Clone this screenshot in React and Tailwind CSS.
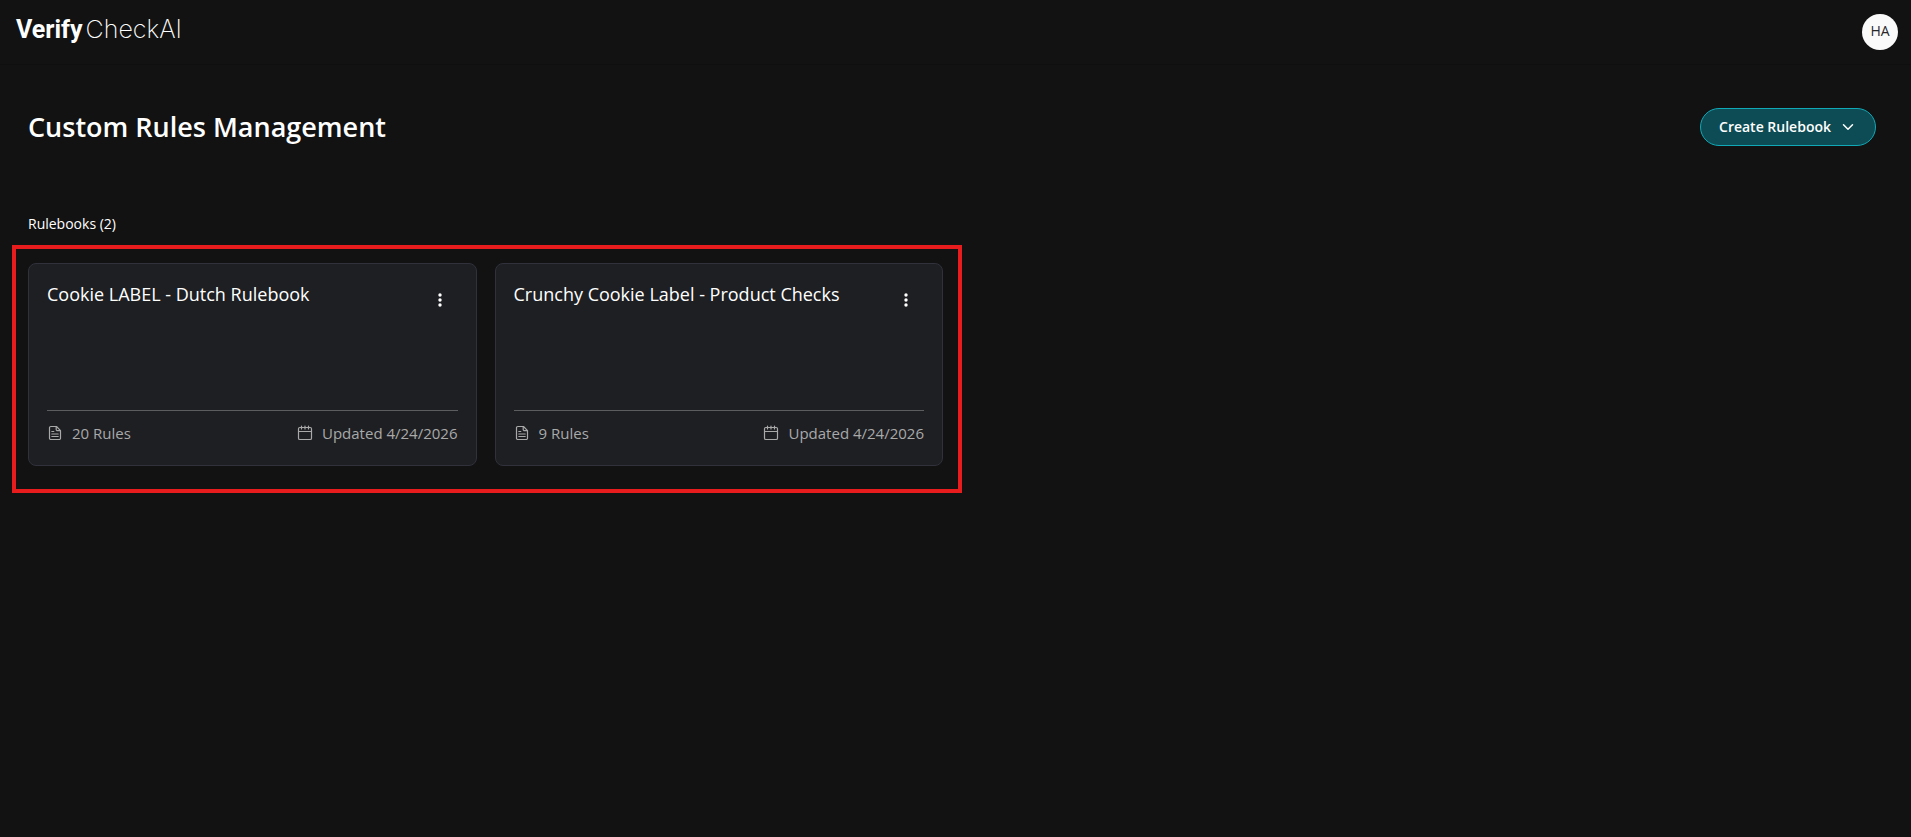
import React from 'react';
import { ChevronDown } from 'lucide-react';

const rulebooks = [
  { id: 1, name: 'Cookie LABEL - Dutch Rulebook', rules: 20, updated: '4/24/2026' },
  { id: 2, name: 'Crunchy Cookie Label - Product Checks', rules: 9, updated: '4/24/2026' },
];

const DotsIcon = () => (
  <svg viewBox="0 0 18 18" className="h-[18px] w-[18px]" fill="currentColor" aria-hidden="true">
    <circle cx="9" cy="4" r="1.7" />
    <circle cx="9" cy="9" r="1.7" />
    <circle cx="9" cy="14" r="1.7" />
  </svg>
);

const FileIcon = () => (
  <svg viewBox="0 0 16 16" className="h-4 w-4" fill="none" stroke="currentColor" strokeWidth="1.2" aria-hidden="true">
    <path d="M9.5 1.5H3.8a1.3 1.3 0 0 0-1.3 1.3v10.4a1.3 1.3 0 0 0 1.3 1.3h8.4a1.3 1.3 0 0 0 1.3-1.3V5.6z" strokeLinejoin="round" />
    <path d="M9.2 1.6v2.8a1.3 1.3 0 0 0 1.3 1.3h2.9" />
    <path d="M4.8 6.5h2M4.8 9h6.4M4.8 11.5h6.4" strokeLinecap="round" />
  </svg>
);

const CalendarIcon = () => (
  <svg viewBox="0 0 16 16" className="h-4 w-4" fill="none" stroke="currentColor" strokeWidth="1.2" strokeLinecap="round" aria-hidden="true">
    <rect x="1.5" y="2.5" width="13" height="12" rx="1.3" />
    <path d="M1.5 6.5h13M4.5 1v3M8 1v3M11.5 1v3" />
  </svg>
);

const RulebookCard = ({ book }) => (
  <article className="flex h-[203px] flex-col rounded-lg border border-[#30313b] bg-[#1e1f23] p-[18px]">
    <div className="flex flex-1 items-start justify-between">
      <h3 className="text-lg leading-6 text-white">{book.name}</h3>
      <button type="button" aria-label="Rulebook options" className="flex h-9 w-9 items-center justify-center text-white">
        <DotsIcon />
      </button>
    </div>
    <div className="flex items-start justify-between border-t border-[#5c5d5f] pt-[10px] pb-[2px] text-[15px] leading-6 text-[#a9a9a9]">
      <span className="flex items-center gap-[9px]">
        <FileIcon /> {book.rules} Rules
      </span>
      <span className="flex items-center gap-[9px]">
        <CalendarIcon /> Updated {book.updated}
      </span>
    </div>
  </article>
);

const App = () => {
  return (
    <div className="min-h-screen bg-[#121212] font-['Open_Sans',sans-serif] text-white">

      {/* Top bar */}
      <header className="flex h-[65px] items-center justify-between border-b border-[#0f0f0f] pr-[13px] pl-4">
        <a href="#" className="flex items-baseline gap-[3px] pb-[6px] text-[25px] leading-8">
          <span className="font-['Roboto',sans-serif] font-bold">Verify</span>
          <span className="font-['Inter',sans-serif] font-extralight">CheckAI</span>
        </a>
        <button type="button" className="h-9 w-9 rounded-full bg-[#fafafa] pb-[2px] text-sm text-[#27272a]">
          HA
        </button>
      </header>

      <main className="pr-[35px] pl-7">

        {/* Page title */}
        <div className="flex items-center justify-between pt-[43px]">
          <h1 className="text-[27px] leading-9 font-semibold">Custom Rules Management</h1>
          <button
            type="button"
            className="flex h-[38px] items-center gap-2 rounded-full border border-[#0fa9b8] bg-[#0d4c54] px-[18px] text-sm font-semibold"
          >
            Create Rulebook
            <ChevronDown className="h-[18px] w-[18px]" />
          </button>
        </div>

        <h2 className="pt-[68px] pb-[29px] text-sm leading-5">Rulebooks ({rulebooks.length})</h2>

        {/* Rulebook grid */}
        <div className="grid grid-cols-4 gap-[18px]">
          <div className="relative col-span-2 grid grid-cols-subgrid">
            {rulebooks.map((book) => (
              <RulebookCard key={book.id} book={book} />
            ))}
            <div className="pointer-events-none absolute -top-[18px] -right-[19px] -bottom-[27px] -left-4 border-4 border-[#e81c1c]" />
          </div>
        </div>

      </main>
    </div>
  );
};

export default App;
